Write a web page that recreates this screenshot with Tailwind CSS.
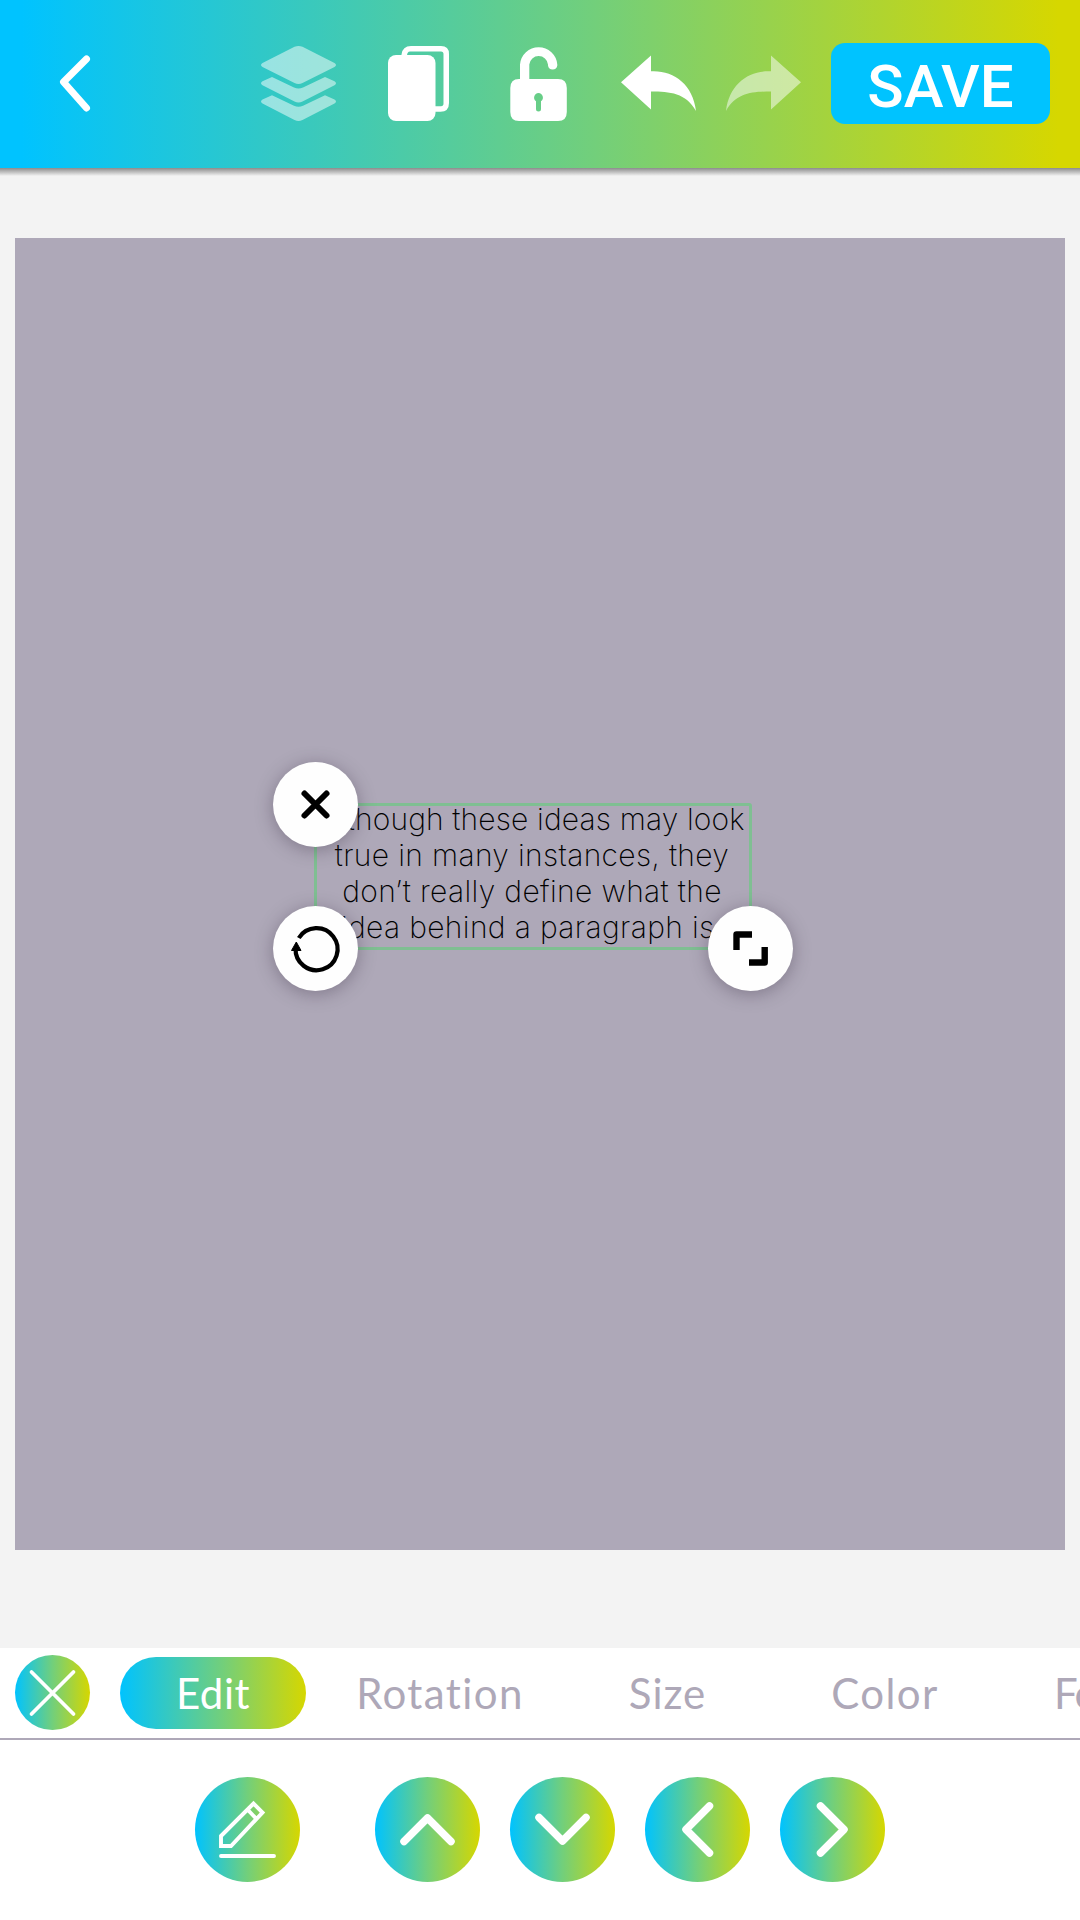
<!DOCTYPE html>
<html lang="en">
<head>
<meta charset="utf-8">
<title>Text editor</title>
<script src="https://cdn.jsdelivr.net/npm/@tailwindcss/browser@4"></script>
</head>
<body class="w-[1080px] h-[1920px] overflow-hidden bg-[#f3f3f3] flex flex-col">

<header class="h-[168px] shrink-0 flex items-start text-white bg-linear-to-r/srgb from-[#00c3ff] from-2% via-[#72cf7b] via-55% to-[#d6d700] to-98%">
  <svg class="w-[50px] h-[168px] ml-[50px]" viewBox="50 0 50 168" fill="none" stroke="currentColor" stroke-width="7" stroke-linecap="round" stroke-linejoin="round"><path d="M86.500 59 63.500 82 86.500 108"/></svg>
  <svg class="w-[80px] h-[168px] ml-[158px] opacity-50" viewBox="258 0 80 168" fill="currentColor">
    <path d="M294.500 46.800Q298.500 45 302.500 46.800L334.500 63Q337.500 65 334.500 67L302.500 83Q298.500 85 294.500 83L262.500 67Q259.500 65 262.500 63Z"/>
    <path d="M272 77 294 87.500Q298.500 89.300 303 87.500L325 77 334.500 81.200Q337.500 83.200 334.500 85.200L302.500 101.500Q298.500 103.500 294.500 101.500L262.500 85.200Q259.500 83.200 262.500 81.200Z"/>
    <path d="M272 95.300 294 105.800Q298.500 107.600 303 105.800L325 95.300 334.500 99.500Q337.500 101.500 334.500 103.500L302.500 120Q298.500 122 294.500 120L262.500 103.500Q259.500 101.500 262.500 99.500Z"/>
  </svg>
  <svg class="w-[66px] h-[168px] ml-[47px]" viewBox="385 0 66 168" fill="currentColor">
    <rect x="388" y="55" width="47.500" height="66" rx="8"/>
    <path d="M401.500 56V54.500Q402.500 46 411 46H441Q449 46 449 54V103Q449 111.700 440.500 111.700H434V106.300H441Q443.500 106.300 443.500 103.500V54Q443.500 51.500 441 51.500H410Q407 51.500 407 56Z"/>
  </svg>
  <svg class="w-[62px] h-[168px] ml-[57px]" viewBox="508 0 62 168" fill="currentColor">
    <path d="M520 81V64.500A18.700 18.700 0 0 1 557.300 64.500V65.500A4.700 4.700 0 0 1 548 65.500V64.500A9.400 9.400 0 0 0 529.300 64.500V81Z"/>
    <path fill-rule="evenodd" d="M519 79H558Q566.800 79 566.800 88V112Q566.800 121 558 121H519Q510.300 121 510.300 112V88Q510.300 79 519 79ZM538.500 93A4.600 4.600 0 0 0 536 101.300V109A2.500 2.500 0 0 0 541 109V101.300A4.600 4.600 0 0 0 538.500 93Z"/>
  </svg>
  <svg class="w-[80px] h-[168px] ml-[48px]" viewBox="618 0 80 168" fill="currentColor"><path d="M621 82.300 651 55.500V71.300C673 70 693 84 696 111C686 93 670 91.500 651 91.500V109.500Z"/></svg>
  <svg class="w-[80px] h-[168px] ml-[26px] opacity-50" viewBox="724 0 80 168" fill="currentColor"><path d="M801 82.300 771 55.500V71.300C749 70 729 84 726 111C736 93 752 91.500 771 91.500V109.500Z"/></svg>
  <button class="w-[219px] h-[81px] ml-[27px] mt-[43px] pt-1.5 rounded-[14px] bg-[#00c3ff] flex items-center justify-center font-[Roboto,sans-serif] font-medium text-[60px] leading-none">SAVE</button>
</header>

<main class="h-[1480px] shrink-0 relative px-[15px] pt-[70px]">
  <div class="absolute inset-x-0 top-0 h-2 bg-linear-to-b from-[#8c8c8c] to-[#f3f3f3]"></div>
  <div class="relative h-[1312px] bg-[#aea8b8]">
    <div class="absolute left-[299px] top-[565px] w-[438px] h-[147px] border-3 border-[#7fbf92] rounded-[3px]">
      <p class="text-center whitespace-nowrap font-[Inter,sans-serif] font-extralight text-[30px] leading-[36px] tracking-[0.35px] text-black -mt-[5px] -ml-0.5"><span class="tracking-[0.15px]">Although these ideas may look</span><br>true in many instances, they<br>don’t really define what the<br>idea behind a paragraph is.</p>
    </div>
    <div class="absolute left-[258px] top-[524px] size-[85px] rounded-full bg-[#fefefe] shadow-[0_3px_18px_rgba(60,50,70,0.4)]">
      <svg class="size-full" viewBox="273 762 85 85" fill="none" stroke="#000" stroke-width="6" stroke-linecap="round"><path d="M304.500 793.500 326.500 815.500M326.500 793.500 304.500 815.500"/></svg>
    </div>
    <div class="absolute left-[258px] top-[668px] size-[85px] rounded-full bg-[#fefefe] shadow-[0_3px_18px_rgba(60,50,70,0.4)]">
      <svg class="size-full" viewBox="273 906 85 85"><path d="M298.800 938A21 21 0 1 1 295.600 948" fill="none" stroke="#000" stroke-width="4.200"/><path d="M296.300 942 301 950.500H291.500Z" stroke="#000" stroke-linejoin="round"/></svg>
    </div>
    <div class="absolute left-[693px] top-[668px] size-[85px] rounded-full bg-[#fefefe] shadow-[0_3px_18px_rgba(60,50,70,0.4)]">
      <svg class="size-full" viewBox="708 906 85 85" fill="none" stroke="#000" stroke-width="6.400" stroke-linejoin="round"><path d="M736.500 950V934.500H752M764.700 947V962.500H749"/></svg>
    </div>
  </div>
</main>

<nav class="h-[92px] shrink-0 bg-white border-b-2 border-[#aea8b8] flex items-start text-[#aea8b8] font-[Lato,sans-serif] text-[42px] leading-[72px] whitespace-nowrap overflow-hidden">
  <button class="size-[75px] shrink-0 ml-[15px] mt-[7px] rounded-full bg-linear-to-r/srgb from-[#00c3ff] via-[#72cf7b] via-50% to-[#d6d700]">
    <svg class="size-full" viewBox="0 0 75 75" fill="none" stroke="#fff" stroke-width="3.800" stroke-linecap="round"><path d="M16.500 17 58.500 59M58.500 17 16.500 59"/></svg>
  </button>
  <button class="w-[186px] h-[72px] shrink-0 ml-[30px] mt-[9px] rounded-full text-white tracking-[0.5px] bg-linear-to-r/srgb from-[#00c3ff] via-[#72cf7b] via-55% to-[#d6d700]">Edit</button>
  <button class="w-[268px] shrink-0 mt-[9px] tracking-[1.4px]">Rotation</button>
  <button class="w-[187px] shrink-0 mt-[9px] tracking-[1px]">Size</button>
  <button class="w-[248px] shrink-0 mt-[9px] tracking-[1.4px]">Color</button>
  <button class="shrink-0 mt-[9px] pl-[45px] tracking-[-1.5px]">Font</button>
</nav>

<footer class="grow bg-white flex pl-[195px] pt-[37px] gap-[30px]">
  <button class="size-[105px] mr-[45px] rounded-full bg-linear-to-r/srgb from-[#00c3ff] via-[#72cf7b] via-50% to-[#d6d700]">
    <svg class="size-full" viewBox="195 1777 105 105" fill="none" stroke="#fff" stroke-width="3.900"><path d="M221 1836 253.500 1803.500 262.500 1812.500 231 1846H221ZM247.500 1809.500 256.500 1819"/><path d="M221 1856H274" stroke-linecap="round"/></svg>
  </button>
  <button class="size-[105px] rounded-full bg-linear-to-r/srgb from-[#00c3ff] via-[#72cf7b] via-50% to-[#d6d700]">
    <svg class="size-full" viewBox="0 0 105 105" fill="none" stroke="#fff" stroke-width="7.500" stroke-linecap="round" stroke-linejoin="round"><path d="M29 64.500 52.500 41 76 64.500"/></svg>
  </button>
  <button class="size-[105px] rounded-full bg-linear-to-r/srgb from-[#00c3ff] via-[#72cf7b] via-50% to-[#d6d700]">
    <svg class="size-full" viewBox="0 0 105 105" fill="none" stroke="#fff" stroke-width="7.500" stroke-linecap="round" stroke-linejoin="round"><path d="M29 40.500 52.500 64 76 40.500"/></svg>
  </button>
  <button class="size-[105px] rounded-full bg-linear-to-r/srgb from-[#00c3ff] via-[#72cf7b] via-50% to-[#d6d700]">
    <svg class="size-full" viewBox="0 0 105 105" fill="none" stroke="#fff" stroke-width="7.500" stroke-linecap="round" stroke-linejoin="round"><path d="M64.500 29 41 52.500 64.500 76"/></svg>
  </button>
  <button class="size-[105px] rounded-full bg-linear-to-r/srgb from-[#00c3ff] via-[#72cf7b] via-50% to-[#d6d700]">
    <svg class="size-full" viewBox="0 0 105 105" fill="none" stroke="#fff" stroke-width="7.500" stroke-linecap="round" stroke-linejoin="round"><path d="M40.500 29 64 52.500 40.500 76"/></svg>
  </button>
</footer>
</body>
</html>
